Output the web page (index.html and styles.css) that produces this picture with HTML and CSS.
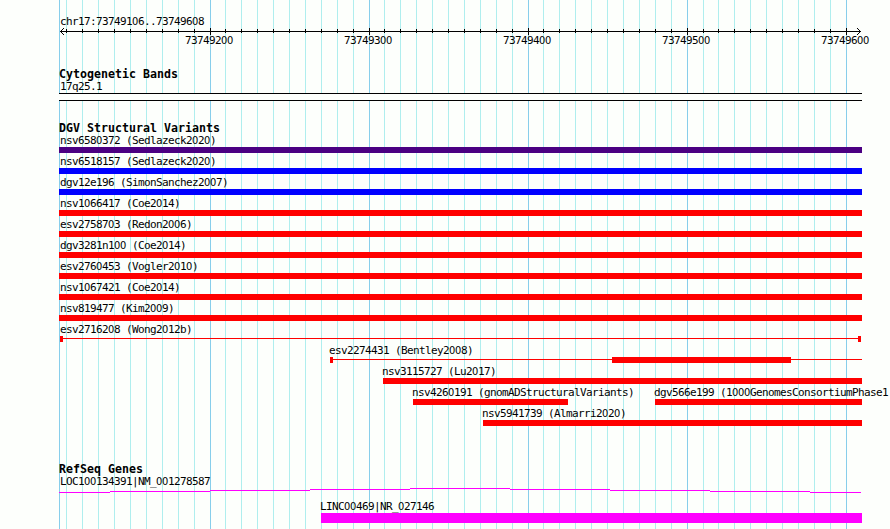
FILE: index.html
```html
<!DOCTYPE html>
<html lang="en">

<head>
    <meta charset="UTF-8" />
    <meta name="viewport" content="width=device-width, initial-scale=1.0" />
    <title>chr17:73749106..73749608</title>
    <link rel="stylesheet" href="styles.css">
</head>

<body>
    <div class="browser">
        <svg class="grid" width="890" height="529" shape-rendering="crispEdges">
            <path class="minor" id="minor-lines" />
            <path class="major" id="major-lines" />
        </svg>

        <div class="tracks">
            <div class="ruler">
                <div class="label clipped">chr17:73749106..73749608</div>
                <svg class="axis" width="890" height="6" shape-rendering="crispEdges">
                    <path d="M60 3h801v1h-801z" />
                    <path d="M61 2h1v3h-1zM62 1h1v1h-1zM62 5h1v1h-1zM63 0h1v1h-1zM63 6h1v1h-1z" />
                    <path d="M859 2h1v3h-1zM858 1h1v1h-1zM858 5h1v1h-1zM857 0h1v1h-1zM857 6h1v1h-1z" />
                    <path id="ticks" />
                </svg>
                <div class="numbers">
                    <span>73749200</span>
                    <span>73749300</span>
                    <span>73749400</span>
                    <span>73749500</span>
                    <span>73749600</span>
                </div>
            </div>

            <div class="track cytoband">
                <h2>Cytogenetic Bands</h2>
                <div class="label clipped">17q25.1</div>
                <div class="band"></div>
            </div>

            <div class="track variants">
                <h2>DGV Structural Variants</h2>
                <div class="lane">
                    <div class="feature clipped"><div class="label">nsv6580372 (Sedlazeck2020)</div><div class="bar indigo"></div></div>
                </div>
                <div class="lane">
                    <div class="feature clipped"><div class="label">nsv6518157 (Sedlazeck2020)</div><div class="bar blue"></div></div>
                </div>
                <div class="lane">
                    <div class="feature clipped"><div class="label">dgv12e196 (SimonSanchez2007)</div><div class="bar blue"></div></div>
                </div>
                <div class="lane">
                    <div class="feature clipped"><div class="label">nsv1066417 (Coe2014)</div><div class="bar"></div></div>
                </div>
                <div class="lane">
                    <div class="feature clipped"><div class="label">esv2758703 (Redon2006)</div><div class="bar"></div></div>
                </div>
                <div class="lane">
                    <div class="feature clipped"><div class="label">dgv3281n100 (Coe2014)</div><div class="bar"></div></div>
                </div>
                <div class="lane">
                    <div class="feature clipped"><div class="label">esv2760453 (Vogler2010)</div><div class="bar"></div></div>
                </div>
                <div class="lane">
                    <div class="feature clipped"><div class="label">nsv1067421 (Coe2014)</div><div class="bar"></div></div>
                </div>
                <div class="lane">
                    <div class="feature clipped"><div class="label">nsv819477 (Kim2009)</div><div class="bar"></div></div>
                </div>
                <div class="lane">
                    <div class="feature clipped">
                        <div class="label">esv2716208 (Wong2012b)</div>
                        <div class="segments" style="margin-left: 1px; width: 801px">
                            <div class="bar" style="width: 3px"></div>
                            <div class="thin"></div>
                            <div class="bar" style="width: 3px"></div>
                        </div>
                    </div>
                </div>
                <div class="lane">
                    <div class="feature" style="margin-left: 271px; width: 532px">
                        <div class="label">esv2274431 (Bentley2008)</div>
                        <div class="segments">
                            <div class="bar" style="width: 3px"></div>
                            <div class="thin"></div>
                            <div class="bar" style="width: 179px"></div>
                            <div class="thin last" style="width: 71px"></div>
                        </div>
                    </div>
                </div>
                <div class="lane">
                    <div class="feature" style="margin-left: 324px; width: 479px"><div class="label">nsv3115727 (Lu2017)</div><div class="bar"></div></div>
                </div>
                <div class="lane">
                    <div class="feature" style="margin-left: 354px; width: 155px"><div class="label">nsv4260191 (gnomADStructuralVariants)</div><div class="bar"></div></div>
                    <div class="feature" style="margin-left: 87px; width: 207px"><div class="label">dgv566e199 (1000GenomesConsortiumPhase1</div><div class="bar"></div></div>
                </div>
                <div class="lane">
                    <div class="feature" style="margin-left: 424px; width: 379px"><div class="label">nsv5941739 (Almarri2020)</div><div class="bar"></div></div>
                </div>
            </div>

            <div class="track genes">
                <h2>RefSeq Genes</h2>
                <div class="label clipped">LOC100134391|NM_001278587</div>
                <svg class="intron" width="890" height="5" shape-rendering="crispEdges">
                    <path d="M59 4h51v1h-51zM110 3h100v1h-100zM210 2h100v1h-100zM310 1h100v1h-100zM410 0h100v1h-100zM510 1h100v1h-100zM610 2h100v1h-100zM710 3h100v1h-100zM810 4h51v1h-51z" />
                </svg>
                <div class="lane gene">
                    <div class="feature" style="margin-left: 262px; width: 541px"><div class="label">LINC00469|NR_027146</div><div class="bar magenta"></div></div>
                </div>
            </div>
        </div>
    </div>

    <script>
        const majors = [210, 369, 528, 687, 846];
        let minorPath = '';
        let majorPath = 'M59 0h1v529h-1z';
        let tickPath = '';

        function addMinor(x) {
            minorPath += `M${x} 0h1v529h-1z`;
            tickPath += `M${x} 1h1v4h-1z`;
        }

        // first stretch, left of 73749200
        for (let x = 66; x < 210; x += 16) {
            addMinor(x);
        }

        majors.forEach((start, i) => {
            majorPath += `M${start} 0h1v529h-1z`;
            tickPath += `M${start} 0h1v7h-1z`;
            if (start === 846) return;
            for (let n = 1; n < 10; n++) {
                // one step in ten is 15px wide
                const short = start === 687 ? 2 : 1;
                addMinor(start + n * 16 - (n >= short ? 1 : 0));
            }
        });

        document.getElementById('minor-lines').setAttribute('d', minorPath);
        document.getElementById('major-lines').setAttribute('d', majorPath);
        document.getElementById('ticks').setAttribute('d', tickPath);

        // plain zeros, without the slash of the mono font
        document.querySelectorAll('.label, .numbers span').forEach(el => {
            el.innerHTML = el.textContent.replace(/0/g, '<b class="zero">0</b>');
        });
    </script>
</body>

</html>
```
FILE: styles.css
```css
body {
    margin: 0;
    background-color: #fdfffc;
    color: #000;
    font-family: 'DejaVu Sans Mono', monospace;
    font-size: 11px;
    line-height: 13px;
    overflow: hidden;
}

.browser {
    position: relative;
    width: 890px;
    height: 529px;
    overflow: hidden;
}

/* Guide lines behind all the tracks */
.grid {
    position: absolute;
    top: 0;
    left: 0;
}

.minor {
    fill: #afeeee;
}

.major {
    fill: #87ceeb;
}

.tracks {
    position: relative;
    padding-top: 15px;
}

.label,
.numbers span {
    height: 13px;
    letter-spacing: -0.622px;
    white-space: nowrap;
}

.zero {
    font-family: 'DejaVu Sans Condensed', 'DejaVu Sans', sans-serif;
    font-stretch: condensed;
    font-weight: normal;
    letter-spacing: -0.3px;
}

.ruler .label,
.track > .label {
    margin-left: 60px;
}

.axis,
.intron {
    display: block;
    overflow: visible;
}

.numbers {
    display: grid;
    grid-template-columns: repeat(5, 159px);
    margin-left: 185px;
}

.track {
    margin-top: 21px;
}

h2 {
    height: 12px;
    margin: 0 0 0 59px;
    font-size: 11.6px;
    font-weight: bold;
    letter-spacing: 0.016px;
    white-space: nowrap;
}

.band {
    width: 803px;
    height: 8px;
    margin-left: 59px;
    box-sizing: border-box;
    border-top: 1px solid #000;
    border-bottom: 1px solid #000;
    background-color: #fdfffc;
}

.lane {
    display: flex;
    height: 21px;
    margin-left: 59px;
}

.feature {
    flex: none;
}

.feature.clipped {
    width: 803px;
}

.feature .label {
    margin-left: -1px;
}

.feature.clipped .label {
    margin-left: 1px;
}

.bar {
    height: 6px;
    background-color: #f00;
}

.indigo {
    background-color: #4b0082;
}

.blue {
    background-color: #00f;
}

.segments {
    display: flex;
}

.thin {
    flex: 1;
    height: 1px;
    margin-top: 2px;
    background-color: #f00;
}

.thin.last {
    flex: none;
}

/* Genes */
.genes {
    margin-top: 35px;
}

.intron {
    fill: #f0f;
}

.gene {
    margin-top: 7px;
}

.magenta {
    height: 10px;
    background-color: #f0f;
}
```
